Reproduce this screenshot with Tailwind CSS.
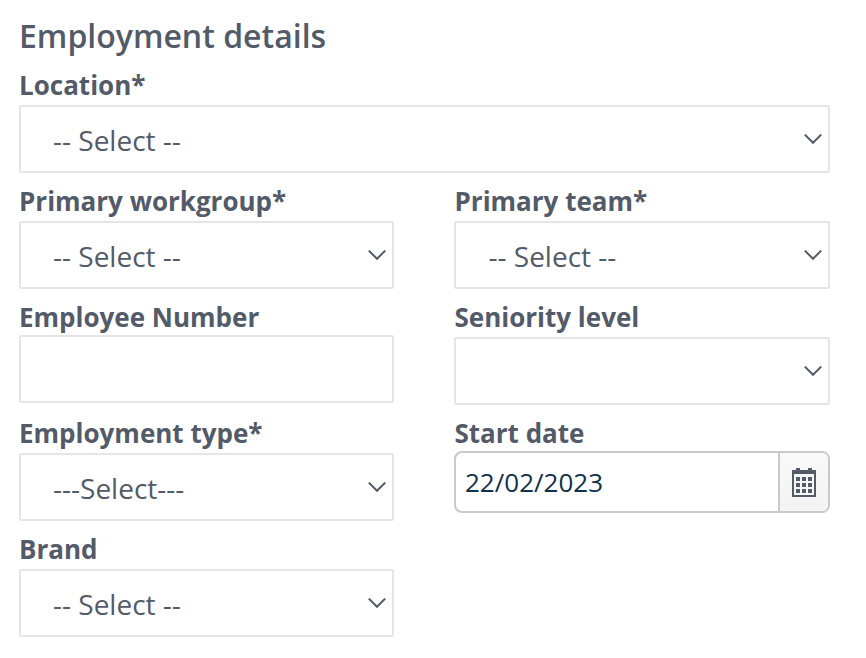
<!DOCTYPE html>
<html lang="en">
<head>
    <meta charset="UTF-8">
    <meta name="viewport" content="width=device-width, initial-scale=1.0">
    <title>Employment details</title>
    <script src="https://cdn.jsdelivr.net/npm/@tailwindcss/browser@4"></script>
</head>
<body class="bg-white text-[#535a68] font-['Open_Sans','Noto_Sans',sans-serif]">

<main class="w-[830px] pl-[19px] pt-3">
    <h1 class="h-12 text-[32px] leading-[48px] font-semibold">Employment details</h1>

    <form class="grid grid-cols-[375px_376px] justify-between">
        <!-- Location -->
        <div class="col-span-2 h-[113px]">
            <label class="block h-[45px] pt-[7px] text-[26px] leading-[36px] font-bold">Location*</label>
            <button type="button" class="flex w-full h-[68px] items-center justify-between border-2 border-[#e5e5e5] rounded-xs pl-8 pr-1.5 text-[28px]">
                <span class="pt-0.5">-- Select --</span>
                <svg class="w-[18px] h-[10px]" viewBox="0 0 18 10" fill="none" stroke="currentColor" stroke-width="2"><path d="M.8 .6 9 8.8 17.2 .6"/></svg>
            </button>
        </div>

        <!-- Workgroup and team -->
        <div class="h-[116px]">
            <label class="block h-12 pt-[10px] text-[26px] leading-[36px] font-bold">Primary workgroup*</label>
            <button type="button" class="flex w-full h-[68px] items-center justify-between border-2 border-[#e5e5e5] rounded-xs pl-8 pr-1.5 text-[28px]">
                <span class="pt-0.5">-- Select --</span>
                <svg class="w-[18px] h-[10px]" viewBox="0 0 18 10" fill="none" stroke="currentColor" stroke-width="2"><path d="M.8 .6 9 8.8 17.2 .6"/></svg>
            </button>
        </div>
        <div class="h-[116px]">
            <label class="block h-12 pl-[0.5px] pt-[10px] text-[26px] leading-[36px] font-bold">Primary team*</label>
            <button type="button" class="flex w-full h-[68px] items-center justify-between border-2 border-[#e5e5e5] rounded-xs pl-[32.5px] pr-1.5 text-[28px]">
                <span class="pt-0.5">-- Select --</span>
                <svg class="w-[18px] h-[10px]" viewBox="0 0 18 10" fill="none" stroke="currentColor" stroke-width="2"><path d="M.8 .6 9 8.8 17.2 .6"/></svg>
            </button>
        </div>

        <!-- Number and seniority -->
        <div class="h-[116px]">
            <label class="block h-[46px] pt-[10px] text-[26px] leading-[36px] font-bold">Employee Number</label>
            <input type="text" class="block w-full h-[68px] border-2 border-[#e5e5e5] rounded-xs px-8 text-[28px]">
        </div>
        <div class="h-[116px]">
            <label class="block h-12 pl-[0.5px] pt-[10px] text-[26px] leading-[36px] font-bold">Seniority level</label>
            <button type="button" class="flex w-full h-[68px] items-center justify-between border-2 border-[#e5e5e5] rounded-xs pl-8 pr-1.5 text-[28px]">
                <span></span>
                <svg class="w-[18px] h-[10px]" viewBox="0 0 18 10" fill="none" stroke="currentColor" stroke-width="2"><path d="M.8 .6 9 8.8 17.2 .6"/></svg>
            </button>
        </div>

        <!-- Type and start date -->
        <div class="h-[116px]">
            <label class="block h-12 pt-[10px] text-[26px] leading-[36px] font-bold">Employment type*</label>
            <button type="button" class="flex w-full h-[68px] items-center justify-between border-2 border-[#e5e5e5] rounded-xs pl-8 pr-1.5 text-[28px]">
                <span class="pt-0.5">---Select---</span>
                <svg class="w-[18px] h-[10px]" viewBox="0 0 18 10" fill="none" stroke="currentColor" stroke-width="2"><path d="M.8 .6 9 8.8 17.2 .6"/></svg>
            </button>
        </div>
        <div class="h-[116px]">
            <label class="block h-[46px] pl-[0.5px] pt-[10px] text-[26px] leading-[36px] font-bold">Start date</label>
            <div class="flex h-[62px] border-2 border-[#c9cacf] rounded-lg overflow-hidden">
                <input type="text" value="22/02/2023" class="flex-1 min-w-0 pl-[9px] text-[26px] text-[#12304a]">
                <button type="button" class="w-[50px] pl-3 border-l-2 border-[#c9cacf] bg-linear-to-b from-[#f9f9f9] to-[#f3f3f3]">
                    <svg class="w-6 h-[29px]" viewBox="0 0 24 29" fill="currentColor" shape-rendering="crispEdges">
                        <path fill-rule="evenodd" d="M0 2H4V0H8V2H16V0H20V2H24V29H0ZM2 6V27H22V6Z"/>
                        <path d="M4 9h4v4H4zM10 9h4v4h-4zM16 9h4v4h-4zM4 15h4v4H4zM10 15h4v4h-4zM16 15h4v4h-4zM4 21h4v4H4zM10 21h4v4h-4zM16 21h4v4h-4z"/>
                    </svg>
                </button>
            </div>
        </div>

        <!-- Brand -->
        <div class="h-[116px]">
            <label class="block h-12 pt-[10px] text-[26px] leading-[36px] font-bold">Brand</label>
            <button type="button" class="flex w-full h-[68px] items-center justify-between border-2 border-[#e5e5e5] rounded-xs pl-8 pr-1.5 text-[28px]">
                <span class="pt-0.5">-- Select --</span>
                <svg class="w-[18px] h-[10px]" viewBox="0 0 18 10" fill="none" stroke="currentColor" stroke-width="2"><path d="M.8 .6 9 8.8 17.2 .6"/></svg>
            </button>
        </div>
    </form>
</main>

</body>
</html>
